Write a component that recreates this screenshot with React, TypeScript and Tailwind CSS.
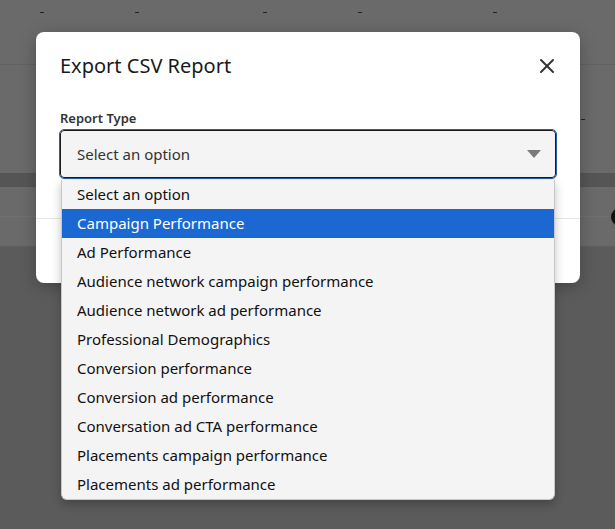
import { X } from "lucide-react";

const options = [
  "Select an option",
  "Campaign Performance",
  "Ad Performance",
  "Audience network campaign performance",
  "Audience network ad performance",
  "Professional Demographics",
  "Conversion performance",
  "Conversion ad performance",
  "Conversation ad CTA performance",
  "Placements campaign performance",
  "Placements ad performance",
];

export default function App() {
  return (
    <div
      className="relative h-[529px] w-[615px] overflow-hidden bg-[#6a6a6a]"
      style={{ fontFamily: '"Noto Sans", "Open Sans", sans-serif' }}
    >
      {/* dimmed page behind the dialog */}
      <div className="flex flex-col">
        <div className="relative h-[65px] border-b border-[#626262]">
          <span className="absolute left-[40px] top-[12px] h-px w-[4px] bg-[#222]" />
          <span className="absolute left-[135px] top-[12px] h-px w-[4px] bg-[#222]" />
          <span className="absolute left-[263px] top-[12px] h-px w-[4px] bg-[#222]" />
          <span className="absolute left-[358px] top-[12px] h-px w-[4px] bg-[#222]" />
          <span className="absolute left-[493px] top-[12px] h-px w-[4px] bg-[#222]" />
        </div>
        <div className="relative h-[108px]">
          <span className="absolute left-[581px] top-[54px] h-px w-[4px] bg-[#222]" />
        </div>
        <div className="h-[14px] bg-[#555555]" />
        <div className="relative h-[30px] border-b border-[#707070]">
          <span className="absolute left-[611px] top-[21px] h-[18px] w-[18px] rounded-full bg-[#111]" />
        </div>
        <div className="h-[30px] border-b border-[#5e5e5e]" />
        <div className="h-[300px] bg-[#5b5b5b]" />
      </div>

      {/* dialog */}
      <div className="absolute left-[36px] top-[32px] flex w-[544px] flex-col rounded-lg bg-white shadow-[0_4px_16px_rgba(0,0,0,0.25)]">
        <div className="flex items-center justify-between px-6 pt-5">
          <h2 className="h-7 text-[20px] leading-7 font-normal text-[#1a1a1a]">
            Export CSV Report
          </h2>
          <button className="-mr-[5px] flex h-7 w-7 items-center justify-center text-[#333]">
            <X size={24} strokeWidth={2} />
          </button>
        </div>
        <label className="mt-[29px] px-6 text-[13px] leading-[18px] font-semibold text-[#333]">
          Report Type
        </label>
        <div className="mx-6 mt-[3px] flex h-[48px] items-center justify-between rounded-[4px] border border-[#1b1b1b] bg-[#f4f4f4] pl-4 pr-3 outline outline-1 outline-offset-0 outline-[#2f5e9e] shadow-[0_2px_3px_rgba(0,0,0,0.08)]">
          <span className="text-[15px] text-[#333]">Select an option</span>
          <svg width="14" height="8" viewBox="0 0 14 8" className="mr-[2px]">
            <path d="M0 0 H14 L7 8 Z" fill="#7a7a7a" />
          </svg>
        </div>
        <div className="mt-[40px] h-[65px] border-t border-[#e6e6e6]" />

        {/* open select list */}
        <ul className="absolute left-[25px] top-[148px] w-[494px] overflow-hidden rounded-b-[6px] border border-t-0 border-[#c8c8c8] bg-[#f4f4f4] shadow-[0_4px_10px_rgba(0,0,0,0.25)]">
          {options.map((o, i) => (
            <li
              key={o}
              className={
                i === 1
                  ? "flex h-[29px] items-center bg-[#1b68d3] pl-[15px] text-[15px] text-white"
                  : "flex h-[29px] items-center pl-[15px] text-[15px] text-[#111]"
              }
            >
              {o}
            </li>
          ))}
        </ul>
      </div>
    </div>
  );
}
